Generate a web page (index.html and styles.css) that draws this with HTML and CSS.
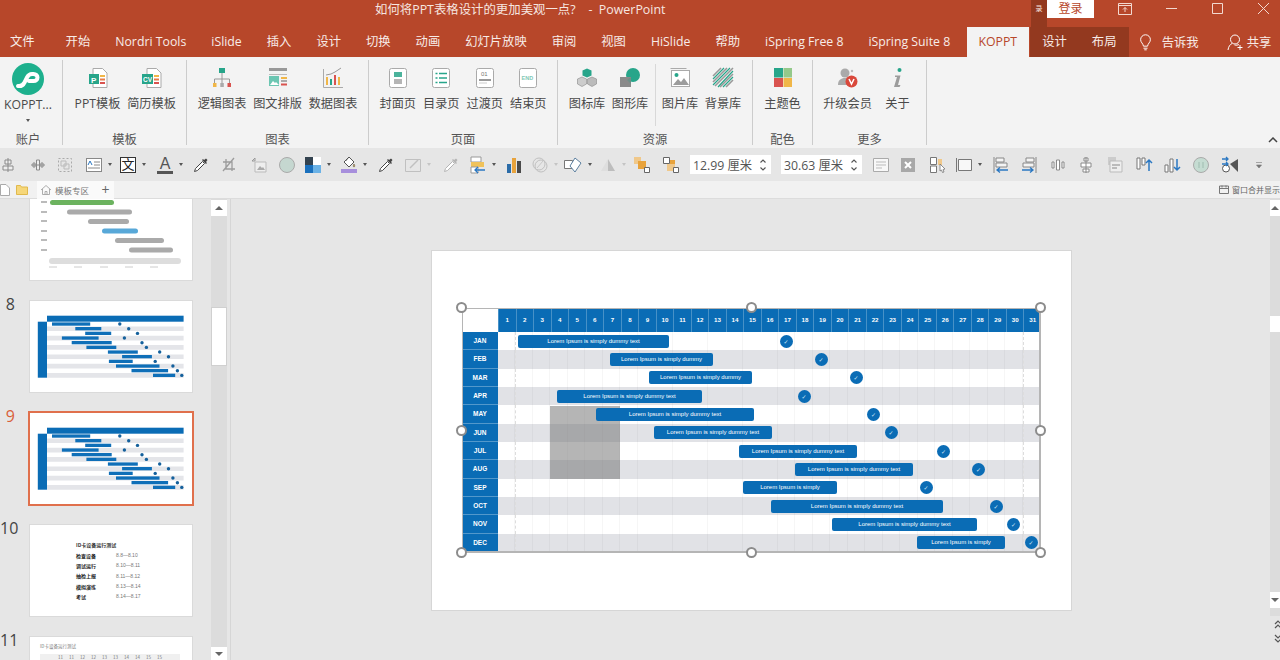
FILE: index.html
```html
<!DOCTYPE html>
<html lang="en">
<head>
    <meta charset="UTF-8">
    <title>PowerPoint</title>
    <link rel="stylesheet" href="styles.css">
</head>
<body>
    <!-- Shared shapes -->
    <svg class="defs" width="0" height="0">
        <defs>
            <symbol id="dropper" viewBox="0 0 16 16">
                <path d="M1.5 14.5l1-3 7-7 2 2-7 7z" fill="#fff" stroke="currentColor"/>
                <path d="M9 3l4 4 1-1-1-1 1.5-2-1.500-1.500-2 1.500-1-1z" fill="currentColor"/>
            </symbol>
            <symbol id="spinner" viewBox="0 0 8 14">
                <path d="M1.500 4.500L4 2l2.500 2.500M1.500 9.500L4 12l2.500-2.500" fill="none" stroke="#555" stroke-width="1.100"/>
            </symbol>
            <symbol id="thumbGantt" viewBox="0 0 162 91">
                <rect x="17" y="14.700" width="136.600" height="6" fill="#0a6cb5"/>
                <rect x="7.800" y="20.700" width="9.200" height="56" fill="#0a6cb5"/>
                <path d="M17 25.400h136.600v4.700H17zM17 34.700h136.600v4.700H17zM17 44.100h136.600v4.700H17zM17 53.400h136.600v4.700H17zM17 62.800h136.600v4.700H17zM17 72.100h136.600v4.700H17z" fill="#e4e5e9"/>
                <g fill="#0f6fb8">
                    <rect x="22" y="21.400" width="38.200" height="3.300"/>
                    <rect x="45.300" y="26" width="26" height="3.300"/>
                    <rect x="55.200" y="30.700" width="26" height="3.300"/>
                    <rect x="31.900" y="35.400" width="36.700" height="3.300"/>
                    <rect x="41.700" y="40" width="40" height="3.300"/>
                    <rect x="56.400" y="44.700" width="29.900" height="3.300"/>
                    <rect x="77.900" y="49.400" width="29.900" height="3.300"/>
                    <rect x="92.100" y="54" width="29.800" height="3.300"/>
                    <rect x="78.900" y="58.700" width="23.800" height="3.300"/>
                    <rect x="86" y="63.400" width="43.500" height="3.300"/>
                    <rect x="101.500" y="68" width="36.600" height="3.300"/>
                    <rect x="123" y="72.700" width="22.200" height="3.300"/>
                </g>
                <g fill="#14609c">
                    <circle cx="89.800" cy="23" r="1.700"/>
                    <circle cx="98.700" cy="27.700" r="1.700"/>
                    <circle cx="107.500" cy="32.400" r="1.700"/>
                    <circle cx="94.400" cy="37" r="1.700"/>
                    <circle cx="112" cy="41.700" r="1.700"/>
                    <circle cx="116.400" cy="46.400" r="1.700"/>
                    <circle cx="129.700" cy="51" r="1.700"/>
                    <circle cx="138.500" cy="55.700" r="1.700"/>
                    <circle cx="125.200" cy="60.400" r="1.700"/>
                    <circle cx="142.900" cy="65" r="1.700"/>
                    <circle cx="147.400" cy="69.700" r="1.700"/>
                    <circle cx="151.800" cy="74.400" r="1.700"/>
                </g>
            </symbol>
        </defs>
    </svg>

    <!-- Title bar -->
    <header class="titlebar">
        <div class="doc-title">如何将PPT表格设计的更加美观一点?&nbsp;&nbsp;&nbsp;&nbsp;-&nbsp;&nbsp;PowerPoint</div>
        <div class="win-controls">
            <div class="sign-strip">录</div>
            <div class="sign-in">登录</div>
            <div class="win-btn win-first">
                <svg width="14" height="12" viewBox="0 0 14 12"><path d="M.5.500h13v11H.5zM.5 2.500h13M7 9V4.500M5 6.500l2-2 2 2" fill="none" stroke="#f3d9d0"/></svg>
            </div>
            <div class="win-btn">
                <svg width="11" height="11" viewBox="0 0 11 11"><path d="M0 5.500h11" stroke="#f3d9d0"/></svg>
            </div>
            <div class="win-btn">
                <svg width="11" height="11" viewBox="0 0 11 11"><path d="M.5.500h10v10H.5z" fill="none" stroke="#f3d9d0"/></svg>
            </div>
            <div class="win-btn win-close">
                <svg width="11" height="11" viewBox="0 0 11 11"><path d="M0 0l11 11M11 0L0 11" stroke="#f3d9d0"/></svg>
            </div>
        </div>
    </header>

    <!-- Ribbon tabs -->
    <nav class="tabs">
        <span class="tab tab-file">文件</span>
        <span class="tab">开始</span>
        <span class="tab">Nordri Tools</span>
        <span class="tab">iSlide</span>
        <span class="tab">插入</span>
        <span class="tab">设计</span>
        <span class="tab">切换</span>
        <span class="tab">动画</span>
        <span class="tab">幻灯片放映</span>
        <span class="tab">审阅</span>
        <span class="tab">视图</span>
        <span class="tab">HiSlide</span>
        <span class="tab">帮助</span>
        <span class="tab">iSpring Free 8</span>
        <span class="tab">iSpring Suite 8</span>
        <span class="tab tab-active">KOPPT</span>
        <div class="tab-context">
            <span class="tab">设计</span>
            <span class="tab">布局</span>
        </div>
        <svg class="bulb" width="13" height="17" viewBox="0 0 16 20"><path d="M5.500 14.500C5 11 2 10 2 6.500a6 6 0 0 1 12 0c0 3.500-3 4.500-3.500 8zM5.500 17h5M6.500 19h3" fill="none" stroke="#fff" stroke-width="1.200"/></svg>
        <span class="tell-me">告诉我</span>
        <svg class="share" width="16" height="18" viewBox="0 0 16 18"><path d="M1 17c.5-3.500 2-5.500 4-6.500M12 11.500c-1 .5-3 1-4.500.5M8 11a4.500 4.500 0 1 0 0-9 4.500 4.500 0 0 0 0 9zM13 12v5M10.500 14.500h5" fill="none" stroke="#fff"/></svg>
        <span class="share-text">共享</span>
    </nav>

    <!-- Ribbon -->
    <section class="ribbon">
        <div class="group group-account">
            <div class="group-btns">
                <div class="btn btn-koppt">
                    <svg width="32" height="32" viewBox="0 0 32 32"><circle cx="16" cy="16" r="16" fill="#1db08d"/><path d="M6 23c3 .5 5-.5 6.500-3.500l2.500-5c1-2 2.500-3.500 5-3.500h1.500c2.500 0 4 1.500 4 3.500s-1.500 3.500-4 3.500h-4.500" fill="none" stroke="#fff" stroke-width="4" stroke-linecap="round"/></svg>
                    <span class="btn-label">KOPPT...</span>
                    <i class="caret caret-under"></i>
                </div>
            </div>
            <div class="group-label">账户</div>
        </div>

        <div class="group group-template">
            <div class="group-btns">
                <div class="btn">
                    <svg class="btn-icon" width="20" height="20" viewBox="0 0 20 20"><path d="M5 .500h9.500L19 5v14.500H5z" fill="#fff" stroke="#aaa"/><rect x="1" y="6" width="10" height="10" fill="#27a58a"/><text x="3" y="14.500" class="icon-text">P</text><path d="M12 7h5v2h-5z" fill="#f0b648"/><path d="M12 10.500h5v2h-5z" fill="#e67d4b"/><path d="M12 14h5v2h-5z" fill="#d9534f"/></svg>
                    <span class="btn-label">PPT模板</span>
                </div>
                <div class="btn">
                    <svg class="btn-icon" width="20" height="20" viewBox="0 0 20 20"><path d="M5 .500h9.500L19 5v14.500H5z" fill="#fff" stroke="#aaa"/><rect x="0" y="6" width="11" height="10" fill="#27a58a"/><text x="1" y="13.500" class="icon-text-small">CV</text><path d="M12 7h5v2h-5z" fill="#f0b648"/><path d="M12 10.500h5v2h-5z" fill="#e67d4b"/><path d="M12 14h5v2h-5z" fill="#d9534f"/></svg>
                    <span class="btn-label">简历模板</span>
                </div>
            </div>
            <div class="group-label">模板</div>
        </div>

        <div class="group group-chart">
            <div class="group-btns">
                <div class="btn">
                    <svg class="btn-icon" width="20" height="20" viewBox="0 0 20 20"><path d="M10 5v6M2.500 15v-4h15v4M10 11v4" fill="none" stroke="#999"/><rect x="7" y="0" width="6" height="5" fill="#27a58a"/><rect x="1" y="15" width="3.500" height="4" fill="#f0b648"/><rect x="8.300" y="15" width="3.500" height="4" fill="#aaa"/><rect x="15.500" y="15" width="3.500" height="4" fill="#d9534f"/></svg>
                    <span class="btn-label">逻辑图表</span>
                </div>
                <div class="btn">
                    <svg class="btn-icon" width="20" height="20" viewBox="0 0 20 20"><path d="M1 0h18v3H1z" fill="#999"/><path d="M1 6h18v1H1z" fill="#bbb"/><rect x="1" y="8" width="10" height="10" fill="#6cc6b2"/><path d="M2 17l3-4 2 2 1-1 3 3z" fill="#fff"/><path d="M13 9h6v2h-6z" fill="#f0b648"/><path d="M13 12h6v2h-6z" fill="#aaa"/><path d="M13 15.500h6v2h-6z" fill="#d9534f"/></svg>
                    <span class="btn-label">图文排版</span>
                </div>
                <div class="btn">
                    <svg class="btn-icon" width="20" height="20" viewBox="0 0 20 20"><path d="M.5 1v18.500H20" fill="none" stroke="#aaa"/><path d="M3 17V9h2v8z" fill="#f0b648"/><path d="M7 17v-6h2v6z" fill="#27a58a"/><path d="M11 17V7h2v10z" fill="#d9534f"/><path d="M15 17V9h2v8z" fill="#f0b648"/><path d="M3 7l5-1 4-2 6-4" fill="none" stroke="#999"/></svg>
                    <span class="btn-label">数据图表</span>
                </div>
            </div>
            <div class="group-label">图表</div>
        </div>

        <div class="group group-page">
            <div class="group-btns">
                <div class="btn">
                    <svg class="btn-icon" width="20" height="20" viewBox="0 0 20 20"><rect x="1.500" y=".5" width="17" height="19" rx="2" fill="#fff" stroke="#aaa"/><rect x="6" y="4" width="8" height="5" fill="#4bb39c"/><rect x="6" y="11" width="8" height="5" fill="#b5b5b5"/></svg>
                    <span class="btn-label">封面页</span>
                </div>
                <div class="btn">
                    <svg class="btn-icon" width="20" height="20" viewBox="0 0 20 20"><rect x="1.500" y=".5" width="17" height="19" rx="2" fill="#fff" stroke="#aaa"/><path d="M4.500 5.500h2M8 5.500h8M4.500 10h2M8 10h8M4.500 14.500h2M8 14.500h8" stroke="#27a58a" stroke-width="1.500"/></svg>
                    <span class="btn-label">目录页</span>
                </div>
                <div class="btn">
                    <svg class="btn-icon" width="20" height="20" viewBox="0 0 20 20"><rect x="1.500" y=".5" width="17" height="19" rx="2" fill="#fff" stroke="#aaa"/><text x="6" y="8" class="icon-text-tiny">01</text><path d="M4 12h12" stroke="#999" stroke-width="2"/><path d="M4 15h8" stroke="#ccc"/></svg>
                    <span class="btn-label">过渡页</span>
                </div>
                <div class="btn">
                    <svg class="btn-icon" width="20" height="20" viewBox="0 0 20 20"><rect x="1.500" y=".5" width="17" height="19" rx="2" fill="#fff" stroke="#aaa"/><text x="3.500" y="11.500" class="icon-text-end">END</text></svg>
                    <span class="btn-label">结束页</span>
                </div>
            </div>
            <div class="group-label">页面</div>
        </div>

        <div class="group group-assets">
            <div class="group-btns">
                <div class="btn">
                    <svg class="btn-icon" width="20" height="20" viewBox="0 0 20 20"><path d="M10 .5l4.500 2v5L10 9.500l-4.500-2v-5z" fill="#27a58a"/><path d="M5 9l4.500 2v5L5 18.500l-4.500-2.500v-5z" fill="#ccc" stroke="#888" stroke-width=".6"/><path d="M15 9l4.500 2v5L15 18.500 10.500 16v-5z" fill="#bbb" stroke="#888" stroke-width=".6"/></svg>
                    <span class="btn-label">图标库</span>
                </div>
                <div class="btn">
                    <svg class="btn-icon" width="20" height="20" viewBox="0 0 20 20"><circle cx="13" cy="7" r="7" fill="#27a58a"/><path d="M0 9h11v10H0z" fill="#8a8a8a"/><path d="M7 12l4-3v7z" fill="#6f8f88"/></svg>
                    <span class="btn-label">图形库</span>
                </div>
                <div class="sep"></div>
                <div class="btn">
                    <svg class="btn-icon" width="20" height="20" viewBox="0 0 20 20"><path d="M.5.500h16" stroke="#aaa"/><rect x="1.500" y="2.500" width="18" height="16" fill="#fff" stroke="#aaa"/><path d="M3 17l5-6 3 3 3-4 5 7z" fill="#9c9c9c"/><circle cx="6.500" cy="7" r="2" fill="#27a58a"/></svg>
                    <span class="btn-label">图片库</span>
                </div>
                <div class="btn">
                    <svg class="btn-icon" width="20" height="20" viewBox="0 0 20 20"><path d="M0 8l8-8M0 14L14 0M2 18L20 0M7 19L20 6M13 19l7-7" fill="none" stroke="#999" stroke-width="1.600"/><path d="M0 11L11 0M0 17L17 0M5 19L20 3M10 19L20 9" fill="none" stroke="#27a58a" stroke-width="1.200"/></svg>
                    <span class="btn-label">背景库</span>
                </div>
            </div>
            <div class="group-label">资源</div>
        </div>

        <div class="group group-color">
            <div class="group-btns">
                <div class="btn">
                    <svg class="btn-icon" width="20" height="20" viewBox="0 0 20 20"><path d="M1 0h9v9.500H1z" fill="#27a58a"/><path d="M10.500 0H19v9.500h-8.500z" fill="#94c98a"/><path d="M1 10h9v9H1z" fill="#d9534f"/><path d="M10.500 10H19v9h-8.500z" fill="#f0b648"/></svg>
                    <span class="btn-label">主题色</span>
                </div>
            </div>
            <div class="group-label">配色</div>
        </div>

        <div class="group group-more">
            <div class="group-btns">
                <div class="btn btn-vip">
                    <svg class="btn-icon" width="20" height="20" viewBox="0 0 20 20"><circle cx="7" cy="5" r="4.500" fill="#aaa"/><path d="M0 17c0-5 3-7 7-7s5 1 6 2v5z" fill="#aaa"/><circle cx="13.500" cy="13.500" r="6" fill="#d9483b"/><path d="M11 11l2.500 5 2.500-5" fill="none" stroke="#fff" stroke-width="1.500"/><circle cx="14" cy="3" r="1.200" fill="#bbb"/></svg>
                    <span class="btn-label">升级会员</span>
                </div>
                <div class="btn btn-about">
                    <svg class="btn-icon" width="20" height="20" viewBox="0 0 20 20"><circle cx="11.500" cy="2" r="2" fill="#27a58a"/><path d="M7 7.500h5.500L10 17h2.500L11.500 19H6l3-10H7z" fill="#9c9c9c"/></svg>
                    <span class="btn-label">关于</span>
                </div>
            </div>
            <div class="group-label">更多</div>
        </div>

        <svg class="collapse" width="10" height="6" viewBox="0 0 10 6"><path d="M1 5l4-4 4 4" fill="none" stroke="#444" stroke-width="1.500"/></svg>
    </section>

    <!-- Quick tools -->
    <section class="toolbar">
        <div class="tool w30"><svg width="16" height="16" viewBox="0 0 16 16"><path d="M8 1v14M5 3h6v4H5zM3 9h10v4H3z" fill="#eee" stroke="#8a8a8a"/></svg></div>
        <div class="tool w27"><svg width="16" height="16" viewBox="0 0 16 16"><path d="M1 8h14M3 6h2v4H3zM6.500 3h3v10h-3zM11 6h2v4h-2z" fill="#eee" stroke="#8a8a8a"/></svg></div>
        <div class="tool w29"><svg width="16" height="16" viewBox="0 0 16 16"><path d="M1.500 1.500h13v13h-13z" fill="none" stroke="#aaa" stroke-dasharray="2 2"/><path d="M4 4h5v5H4zM7 7h5v5H7z" fill="none" stroke="#bbb"/></svg></div>
        <div class="tool w34"><svg width="16" height="14" viewBox="0 0 16 14"><rect x=".5" y=".5" width="15" height="13" fill="#fff" stroke="#888"/><path d="M8 4h6M8 7h6M2 10h12" stroke="#8a8a8a"/><path d="M2 7l2-4 2 4" fill="none" stroke="#2b78c2"/></svg><i class="caret"></i></div>
        <div class="tool w37"><span class="wen">文</span><i class="caret"></i></div>
        <div class="tool w36"><span class="letter-a">A</span><i class="caret"></i></div>
        <div class="tool w28 tool-dark"><svg width="16" height="16"><use href="#dropper"/></svg></div>
        <div class="tool w30"><svg width="16" height="16" viewBox="0 0 16 16"><path d="M5 2v10h9M2 5h9v9M13 1L2 14" fill="none" stroke="#9c9c9c" stroke-width="1.300"/></svg></div>
        <div class="tool w28"><svg width="16" height="16" viewBox="0 0 16 16"><path d="M4 5h11v10H4z" fill="#eee" stroke="#bbb"/><path d="M1 4l3-3M4 1v3H1" fill="none" stroke="#999"/><path d="M6 13l3-4 2 2 1-1 2 3z" fill="#aaa"/></svg></div>
        <div class="tool w26"><svg width="16" height="16" viewBox="0 0 16 16"><circle cx="8" cy="8" r="7.500" fill="#c5d7d0" stroke="#aaa"/></svg></div>
        <div class="tool w36"><svg width="16" height="16" viewBox="0 0 16 16"><path d="M0 0h8v8H0z" fill="#33424f"/><path d="M8 0h8v8H8z" fill="#fff"/><path d="M0 8h8v8H0z" fill="#1a70bd"/><path d="M8 8h8v8H8z" fill="#6bb2e6"/></svg><i class="caret"></i></div>
        <div class="tool w37"><svg width="16" height="17" viewBox="0 0 16 17"><path d="M8 1l5 5-5 5-5-5z" fill="#fff" stroke="#555"/><path d="M5 5l3-4M13 8c1 1 1 3 0 3s-1-2 0-3z" fill="#f0b648" stroke="#555" stroke-width=".6"/><path d="M0 13h16v4H0z" fill="#a78fdc"/></svg><i class="caret"></i></div>
        <div class="tool w27 tool-dark"><svg width="16" height="16"><use href="#dropper"/></svg></div>
        <div class="tool w38 tool-faint"><svg width="16" height="14" viewBox="0 0 16 14"><path d="M.5 1.500h15v12H.5z" fill="none" stroke="#c0c0c0"/><path d="M5 10l8-8" stroke="#c0c0c0" stroke-width="1.500"/></svg><i class="caret"></i></div>
        <div class="tool w27 tool-pale"><svg width="16" height="16"><use href="#dropper"/></svg></div>
        <div class="tool w36"><svg width="16" height="18" viewBox="0 0 16 18"><path d="M1 1h10v5H1z" fill="#fff" stroke="#999"/><path d="M1 6h13v5H1z" fill="#f0c25a"/><path d="M1 11h7v6H1z" fill="#fff" stroke="#999"/><path d="M15 14H5M8 11l-3 3 3 3" fill="none" stroke="#2b78c2" stroke-width="1.300"/></svg><i class="caret"></i></div>
        <div class="tool w26"><svg width="16" height="16" viewBox="0 0 16 16"><path d="M1 7h4v9H1z" fill="#2b6ca8"/><path d="M6 1h4v15H6z" fill="#e8a33c"/><path d="M11 4h4v12h-4z" fill="#4a4a4a"/></svg></div>
        <div class="tool w32 tool-faint"><svg width="16" height="16" viewBox="0 0 16 16"><circle cx="7" cy="7" r="6" fill="none" stroke="#c0c0c0"/><circle cx="9" cy="9" r="6" fill="none" stroke="#c0c0c0"/><path d="M5 11l6-7" stroke="#c8c8c8"/></svg><i class="caret"></i></div>
        <div class="tool w36"><svg width="18" height="16" viewBox="0 0 18 16"><path d="M.5 3.500h8v8h-8z" fill="#fff" stroke="#777"/><path d="M11 1l6 5-6 9-5-6z" fill="#fff" stroke="#5b7f9f"/></svg><i class="caret"></i></div>
        <div class="tool w34 tool-faint"><svg width="16" height="14" viewBox="0 0 16 14"><path d="M8 1l7 12H8z" fill="#bdbdbd"/><path d="M8 1L1 13h7z" fill="#dedede"/></svg><i class="caret"></i></div>
        <div class="tool w29"><svg width="16" height="16" viewBox="0 0 16 16"><path d="M0 0h7v7H0z" fill="#f0c88a"/><path d="M4 4h8v8H4z" fill="#e8a33c"/><path d="M10.500 10.500h5v5h-5z" fill="#fff" stroke="#666"/></svg></div>
        <div class="tool w27"><svg width="16" height="16" viewBox="0 0 16 16"><path d="M.5.500h6v6h-6z" fill="#fff" stroke="#666"/><path d="M4 7h8v7H4z" fill="#f0c88a"/><path d="M7 3h5v4H7z" fill="#e8a33c"/><path d="M10.500 10.500h5v5h-5z" fill="#fff" stroke="#666"/></svg></div>
        <div class="size-input"><span>12.99 厘米</span><svg width="8" height="14"><use href="#spinner"/></svg></div>
        <div class="size-input size-second"><span>30.63 厘米</span><svg width="8" height="14"><use href="#spinner"/></svg></div>
        <div class="tool w28"><svg width="16" height="14" viewBox="0 0 16 14"><path d="M.5.500h15v13H.5z" fill="#f8f8f8" stroke="#aaa"/><path d="M3 4h10M3 7h10M3 10h6" stroke="#bbb"/></svg></div>
        <div class="tool w29"><svg width="14" height="14" viewBox="0 0 14 14"><path d="M0 0h14v14H0z" fill="#a8a8a8"/><path d="M4 4l6 6M10 4l-6 6" stroke="#fff" stroke-width="2"/></svg></div>
        <div class="tool w26"><svg width="16" height="16" viewBox="0 0 16 16"><path d="M.5.500h6v7h-6zM.5 9h6v6.500h-6z" fill="#fff" stroke="#777"/><path d="M8 2h4v6H8z" fill="#f0c88a"/><path d="M10 7l5 5-2 .5 1 2.500-1.500.5-1-2.500L10 14z" fill="#fff" stroke="#777" stroke-width=".8"/></svg></div>
        <div class="tool w37"><svg width="16" height="14" viewBox="0 0 16 14"><path d="M.5 0v14M2.500 1.500h13v11h-13z" fill="#f8f8f8" stroke="#777"/></svg><i class="caret"></i></div>
        <div class="tool w28"><svg width="16" height="16" viewBox="0 0 16 16"><path d="M1 0v16M3 1h8v4H3zM3 6h11v4H3z" fill="#f4f4f4" stroke="#888"/><path d="M15 13H4M7 10.500L4 13l3 2.500" fill="none" stroke="#2b78c2" stroke-width="1.300"/></svg></div>
        <div class="tool w29"><svg width="16" height="16" viewBox="0 0 16 16"><path d="M15 0v16M5 1h8v4H5zM2 6h11v4H2z" fill="#f4f4f4" stroke="#888"/><path d="M1 13h11M9 10.500l3 2.500-3 2.500" fill="none" stroke="#2b78c2" stroke-width="1.300"/></svg></div>
        <div class="tool w28"><svg width="16" height="16" viewBox="0 0 16 16"><path d="M2 5h2v6H2zM6.500 3h3v10h-3zM12 5h2v6h-2z" fill="#fff" stroke="#8a8a8a"/></svg></div>
        <div class="tool w29"><svg width="16" height="16" viewBox="0 0 16 16"><path d="M8 0v16M6 1h4v3H6zM3 6h10v4H3zM5 12h6v3H5z" fill="#fff" stroke="#8a8a8a"/></svg></div>
        <div class="tool w29"><svg width="16" height="16" viewBox="0 0 16 16"><path d="M1 0h8v8H1z" fill="#ccc"/><path d="M3 4h12v11H3z" fill="#eee" stroke="#bbb"/><path d="M5 8h8M5 11h5" stroke="#888"/></svg></div>
        <div class="tool w28"><svg width="16" height="16" viewBox="0 0 16 16"><path d="M1 1h3v11H1zM6 1h3v7H6z" fill="#fff" stroke="#777"/><path d="M13 14V3M10 6l3-3 3 3" fill="none" stroke="#2b78c2" stroke-width="1.500"/></svg></div>
        <div class="tool w29"><svg width="16" height="16" viewBox="0 0 16 16"><path d="M1 8h3v7H1zM6 2h3v13H6z" fill="#fff" stroke="#777"/><path d="M13 2v11M10 10l3 3 3-3" fill="none" stroke="#2b78c2" stroke-width="1.500"/></svg></div>
        <div class="tool w28"><svg width="16" height="16" viewBox="0 0 16 16"><circle cx="8" cy="8" r="7.500" fill="#c5dcd2" stroke="#aaa"/><path d="M6 5v6M10 5v6" stroke="#9fbcb0"/></svg></div>
        <div class="tool w30"><svg width="18" height="17" viewBox="0 0 18 17"><path d="M1 3h6M5 1l2 2-2 2" fill="none" stroke="#2b78c2" stroke-width="1.300"/><path d="M9 8l8-5v13z" fill="#555"/><circle cx="5" cy="12.500" r="3.500" fill="#fff" stroke="#555"/><path d="M1 8h6M5 6l2 2-2 2" fill="none" stroke="#2b78c2" stroke-width="1.300"/></svg></div>
        <div class="tool w28"><svg width="16" height="16" viewBox="0 0 16 16"><path d="M5 5.500h6M5.500 8h5l-2.500 3z" fill="#777" stroke="#777" stroke-width=".6"/></svg></div>
    </section>

    <!-- File tabs -->
    <section class="file-tabs">
        <svg class="file-ico" width="10" height="12" viewBox="0 0 10 12"><path d="M.5.500H6L9.500 4v7.500H.5z" fill="#fff" stroke="#aaa"/></svg>
        <svg class="file-ico" width="12" height="11" viewBox="0 0 12 11"><path d="M.5 1.500h4l1 1.500h6v7.500H.5z" fill="#f6d77a" stroke="#e0b94d"/></svg>
        <div class="file-tab">
            <svg width="10" height="10" viewBox="0 0 10 10"><path d="M0 5l5-4.500L10 5M1.500 4v5.500h7V4M4 9.500V6.500h2v3" fill="none" stroke="#999" stroke-width=".8"/></svg>
            <span>模板专区</span>
        </div>
        <div class="file-add">+</div>
        <div class="merge-view">
            <svg width="10" height="9" viewBox="0 0 10 9"><path d="M.5 1h9v7.500h-9zM.5 3.500h9M3 .5v2M7 .5v2" fill="none" stroke="#777"/></svg>
            <span>窗口合并显示</span>
        </div>
    </section>

    <main class="workspace">
        <!-- Slide thumbnails -->
        <aside class="pane">
            <div class="thumbs">
                <div class="thumb-row thumb-row-first">
                    <span class="thumb-num"></span>
                    <div class="thumb thumb-cut">
                        <svg width="162" height="81" viewBox="0 0 162 81">
                            <path d="M11 2h6v2h-6zM11 12h6v2h-6zM11 21h6v2h-6zM11 31h6v2h-6zM11 40h6v2h-6zM11 50h6v2h-6z" fill="#bbb"/>
                            <rect x="20" y="1" width="64" height="5" rx="2.500" fill="#6cb35f"/>
                            <rect x="37" y="10.500" width="65" height="5" rx="2.500" fill="#aaa"/>
                            <rect x="58" y="20" width="41" height="5" rx="2.500" fill="#aaa"/>
                            <rect x="72" y="29.500" width="36" height="5" rx="2.500" fill="#58a8d8"/>
                            <rect x="85" y="39" width="49" height="5" rx="2.500" fill="#aaa"/>
                            <rect x="99" y="48.500" width="44" height="5" rx="2.500" fill="#aaa"/>
                            <rect x="19" y="59" width="132" height="6" rx="3" fill="#dddddd"/>
                            <path d="M19 68h8M44 68h8M70 68h8M95 68h8M120 68h8" stroke="#ccc"/>
                        </svg>
                    </div>
                </div>
                <div class="thumb-row">
                    <span class="thumb-num">8</span>
                    <div class="thumb"><svg width="162" height="91"><use href="#thumbGantt"/></svg></div>
                </div>
                <div class="thumb-row">
                    <span class="thumb-num thumb-num-active">9</span>
                    <div class="thumb thumb-active"><svg width="162" height="91"><use href="#thumbGantt"/></svg></div>
                </div>
                <div class="thumb-row">
                    <span class="thumb-num">10</span>
                    <div class="thumb thumb-list">
                        <div class="list-title">ID卡设备运行测试</div>
                        <div class="list-grid">
                            <b>检查设备</b><span>8.8—8.10</span>
                            <b>调试运行</b><span>8.10—8.11</span>
                            <b>抽检上报</b><span>8.11—8.12</span>
                            <b>模拟演练</b><span>8.13—8.14</span>
                            <b>考试</b><span>8.14—8.17</span>
                        </div>
                    </div>
                </div>
                <div class="thumb-row">
                    <span class="thumb-num">11</span>
                    <div class="thumb thumb-table">
                        <div class="table-title">ID卡设备运行测试</div>
                        <div class="table-head">11 11 12 12 13 13 14 14 15 15</div>
                    </div>
                </div>
            </div>
            <div class="scrollbar">
                <div class="sb-btn"><i class="tri-up"></i></div>
                <div class="sb-thumb"></div>
                <div class="sb-btn sb-btn-end"><i class="tri-down"></i></div>
            </div>
        </aside>

        <!-- Editing canvas -->
        <div class="canvas">
            <div class="slide">
                <div class="gantt">
                    <div class="gantt-head">
                        <div class="corner"></div>
                        <div class="days">
                            <span>1</span><span>2</span><span>3</span><span>4</span><span>5</span><span>6</span><span>7</span><span>8</span><span>9</span><span>10</span><span>11</span><span>12</span><span>13</span><span>14</span><span>15</span><span>16</span><span>17</span><span>18</span><span>19</span><span>20</span><span>21</span><span>22</span><span>23</span><span>24</span><span>25</span><span>26</span><span>27</span><span>28</span><span>29</span><span>30</span><span>31</span>
                        </div>
                    </div>
                    <div class="gantt-row">
                        <div class="month">JAN</div>
                        <div class="track">
                            <div class="bar" style="left:20px;width:151px">Lorem Ipsum is simply dummy text</div>
                            <div class="dot" style="left:281.500px">✓</div>
                        </div>
                    </div>
                    <div class="gantt-row">
                        <div class="month">FEB</div>
                        <div class="track">
                            <div class="bar" style="left:112px;width:103px">Lorem Ipsum is simply dummy</div>
                            <div class="dot" style="left:316.500px">✓</div>
                        </div>
                    </div>
                    <div class="gantt-row">
                        <div class="month">MAR</div>
                        <div class="track">
                            <div class="bar" style="left:151px;width:103px">Lorem Ipsum is simply dummy</div>
                            <div class="dot" style="left:351.500px">✓</div>
                        </div>
                    </div>
                    <div class="gantt-row">
                        <div class="month">APR</div>
                        <div class="track">
                            <div class="bar" style="left:59px;width:145px">Lorem Ipsum is simply dummy text</div>
                            <div class="dot" style="left:299.500px">✓</div>
                        </div>
                    </div>
                    <div class="gantt-row">
                        <div class="month">MAY</div>
                        <div class="track">
                            <div class="bar" style="left:98px;width:158px">Lorem Ipsum is simply dummy text</div>
                            <div class="dot" style="left:369px">✓</div>
                        </div>
                    </div>
                    <div class="gantt-row">
                        <div class="month">JUN</div>
                        <div class="track">
                            <div class="bar" style="left:156px;width:118px">Lorem Ipsum is simply dummy text</div>
                            <div class="dot" style="left:386.500px">✓</div>
                        </div>
                    </div>
                    <div class="gantt-row">
                        <div class="month">JUL</div>
                        <div class="track">
                            <div class="bar" style="left:241px;width:118px">Lorem Ipsum is simply dummy text</div>
                            <div class="dot" style="left:439px">✓</div>
                        </div>
                    </div>
                    <div class="gantt-row">
                        <div class="month">AUG</div>
                        <div class="track">
                            <div class="bar" style="left:297px;width:118px">Lorem Ipsum is simply dummy text</div>
                            <div class="dot" style="left:474px">✓</div>
                        </div>
                    </div>
                    <div class="gantt-row">
                        <div class="month">SEP</div>
                        <div class="track">
                            <div class="bar" style="left:245px;width:94px">Lorem Ipsum is simply</div>
                            <div class="dot" style="left:421.500px">✓</div>
                        </div>
                    </div>
                    <div class="gantt-row">
                        <div class="month">OCT</div>
                        <div class="track">
                            <div class="bar" style="left:273px;width:172px">Lorem Ipsum is simply dummy text</div>
                            <div class="dot" style="left:491.500px">✓</div>
                        </div>
                    </div>
                    <div class="gantt-row">
                        <div class="month">NOV</div>
                        <div class="track">
                            <div class="bar" style="left:334px;width:145px">Lorem Ipsum is simply dummy text</div>
                            <div class="dot" style="left:509px">✓</div>
                        </div>
                    </div>
                    <div class="gantt-row">
                        <div class="month">DEC</div>
                        <div class="track">
                            <div class="bar" style="left:419px;width:88px">Lorem Ipsum is simply</div>
                            <div class="dot" style="left:526.500px">✓</div>
                        </div>
                    </div>

                    <div class="grey-block"></div>

                    <!-- Selection frame -->
                    <div class="selection">
                        <i class="handle h-tl"></i><i class="handle h-tc"></i><i class="handle h-tr"></i>
                        <i class="handle h-ml"></i><i class="handle h-mr"></i>
                        <i class="handle h-bl"></i><i class="handle h-bc"></i><i class="handle h-br"></i>
                    </div>
                </div>
            </div>
        </div>

        <div class="v-scroll">
            <div class="sb-btn"><i class="tri-up"></i></div>
            <div class="v-thumb"></div>
            <div class="sb-btn v-down"><i class="tri-down"></i></div>
            <div class="page-arrows">
                <svg width="8" height="9" viewBox="0 0 8 9"><path d="M1 4l3-3 3 3M1 8l3-3 3 3" fill="none" stroke="#555" stroke-width="1.200"/></svg>
                <svg width="8" height="9" viewBox="0 0 8 9"><path d="M1 1l3 3 3-3M1 5l3 3 3-3" fill="none" stroke="#555" stroke-width="1.200"/></svg>
            </div>
        </div>
    </main>
</body>
</html>
```

FILE: styles.css
```css
* {
    box-sizing: border-box;
}

html, body {
    margin: 0;
    padding: 0;
    width: 1280px;
    height: 660px;
    overflow: hidden;
}

body {
    font-family: "Open Sans", "Noto Sans CJK SC", sans-serif;
    font-size: 12px;
    color: #444;
    background-color: #e6e6e6;
}

.defs {
    position: absolute;
}

/* Title bar */
.titlebar {
    display: flex;
    height: 27px;
    background-color: #b7472a;
    color: #f6e6e0;
}

.doc-title {
    margin-left: 375px;
    font-size: 12.400px;
    line-height: 19px;
    white-space: nowrap;
}

.win-controls {
    display: flex;
    margin-left: auto;
}

.sign-strip {
    width: 16px;
    background-color: #93391f;
    font-size: 7px;
    line-height: 18px;
    text-align: center;
}

.sign-in {
    width: 47px;
    height: 18px;
    background-color: #fff;
    color: #b7472a;
    font-size: 12px;
    line-height: 18px;
    text-align: center;
}

.win-btn {
    display: flex;
    justify-content: center;
    width: 46px;
    padding-top: 3px;
    height: 18px;
}

.win-first {
    margin-left: 8px;
}

.win-close {
    width: 40px;
    padding-left: 6px;
}

/* Ribbon tabs */
.tabs {
    display: flex;
    align-items: center;
    height: 30px;
    background-color: #b7472a;
    color: #f8ece8;
}

.tab {
    padding: 0 12.500px;
    font-size: 12.300px;
    line-height: 30px;
    white-space: nowrap;
}

.tab-file {
    padding: 0 18.500px 0 10px;
}

.tab-active {
    width: 62px;
    margin-left: 4px;
    padding: 0;
    background-color: #f3f3f3;
    color: #b7472a;
    text-align: center;
}

.tab-context {
    display: flex;
    width: 99px;
    margin-left: 1px;
    background-color: #93391f;
}

.bulb {
    margin-left: 10px;
}

.tell-me {
    margin-left: 10px;
    font-size: 12.300px;
}

.share {
    margin-left: 28px;
}

.share-text {
    margin-left: 4px;
    font-size: 12.300px;
}

/* Ribbon */
.ribbon {
    position: relative;
    display: flex;
    height: 91px;
    padding-top: 3px;
    background-color: #f3f3f3;
}

.group {
    display: flex;
    flex-direction: column;
    align-items: center;
    height: 85px;
    border-right: 1px solid #cccccc;
}

.group-account { width: 63px; padding-right: 6px; }
.group-template { width: 124px; }
.group-chart { width: 182px; }
.group-page { width: 189px; }
.group-assets { width: 195px; }
.group-color { width: 60px; }
.group-more { width: 114px; padding-left: 6px; }

.group-btns {
    display: flex;
    justify-content: center;
    padding-top: 8px;
}

.group-label {
    margin-top: auto;
    margin-bottom: -3px;
    font-size: 12.300px;
    line-height: 16px;
    color: #555;
}

.group-more .group-label {
    margin-left: -6px;
}

.btn {
    display: flex;
    flex-direction: column;
    align-items: center;
    width: 43.500px;
    white-space: nowrap;
}

.group-template .btn { width: 54px; }
.group-chart .btn { width: 55.500px; }
.group-assets .btn { width: 43px; }
.group-color .btn { width: 58px; }
.btn-vip { width: 50px; }
.btn-about { width: 50px; }

.btn-icon {
    display: block;
    margin-bottom: 7px;
    overflow: visible;
}

.btn-label {
    font-size: 12.200px;
    line-height: 17px;
    color: #4a4a4a;
}

.btn-koppt {
    width: 57px;
    margin-top: -5px;
}

.btn-koppt .btn-label {
    margin-top: 1px;
}

.caret-under {
    margin: 6px 0 0 !important;
}

.sep {
    width: 1px;
    height: 62px;
    margin: -4px 3px 0;
    background-color: #d8d8d8;
}

.collapse {
    position: absolute;
    right: 2px;
    bottom: 5px;
}

.icon-text {
    font-family: "Liberation Sans", sans-serif;
    font-size: 8px;
    font-weight: bold;
    fill: #fff;
}

.icon-text-small {
    font-family: "Liberation Sans", sans-serif;
    font-size: 6.500px;
    font-weight: bold;
    fill: #fff;
}

.icon-text-tiny {
    font-family: "Liberation Sans", sans-serif;
    font-size: 6px;
    fill: #777;
}

.icon-text-end {
    font-family: "Liberation Sans", sans-serif;
    font-size: 5.500px;
    font-weight: bold;
    fill: #7fc8b6;
}

/* Quick tools */
.toolbar {
    display: flex;
    align-items: center;
    height: 33px;
    background-color: #e6e6e6;
}

.tool {
    display: flex;
    align-items: center;
    flex: none;
    height: 20px;
}

.tool svg {
    flex: none;
    overflow: visible;
}

.w26 { width: 26px; }
.w27 { width: 27px; }
.w28 { width: 28px; }
.w29 { width: 29px; }
.w30 { width: 30px; }
.w32 { width: 32px; }
.w34 { width: 34px; }
.w36 { width: 36px; }
.w37 { width: 37px; }
.w38 { width: 38px; }

.tool-dark { color: #444; }
.tool-pale { color: #b5b5b5; }
.tool-faint { color: #c0c0c0; }

.caret {
    flex: none;
    width: 0;
    height: 0;
    margin-left: 6px;
    border-left: 2.500px solid transparent;
    border-right: 2.500px solid transparent;
    border-top: 3px solid #555;
}

.tool-faint .caret {
    border-top-color: #c4c4c4;
}

.wen {
    flex: none;
    width: 16px;
    height: 16px;
    border: 1px solid #333;
    background-color: #fff;
    color: #222;
    font-size: 13px;
    line-height: 13px;
    text-align: center;
}

.letter-a {
    flex: none;
    width: 16px;
    border-bottom: 3px solid #555;
    color: #555;
    font-family: "Liberation Sans", sans-serif;
    font-size: 16px;
    line-height: 15px;
    text-align: center;
}

.size-input {
    display: flex;
    align-items: center;
    justify-content: space-between;
    flex: none;
    width: 81px;
    height: 19px;
    padding: 0 4px 0 3px;
    margin-right: 10px;
    background-color: #fff;
    font-size: 12.300px;
    color: #555;
}

.size-second {
    margin-right: 11px;
}

/* File tabs */
.file-tabs {
    display: flex;
    align-items: center;
    height: 18px;
    background-color: #f1f1f1;
    border-bottom: 1px solid #dcdcdc;
}

.file-ico {
    flex: none;
    margin-right: 6px;
}

.file-tab {
    display: flex;
    align-items: center;
    gap: 4px;
    width: 60px;
    height: 18px;
    margin-left: 3px;
    padding-left: 4px;
    background-color: #fafafa;
    font-size: 8.500px;
    color: #777;
}

.file-add {
    width: 17px;
    background-color: #fafafa;
    font-size: 14px;
    line-height: 18px;
    text-align: center;
    color: #666;
}

.merge-view {
    display: flex;
    align-items: center;
    gap: 3px;
    margin-left: auto;
    white-space: nowrap;
    font-size: 8px;
    color: #666;
    width: 61px;
}

.merge-view svg {
    flex: none;
}

/* Workspace */
.workspace {
    display: flex;
    height: 461px;
}

.pane {
    display: flex;
    flex: none;
    width: 231px;
    padding-right: 3px;
    border-right: 1px solid #d6d6d6;
}

.thumbs {
    width: 212px;
    overflow: hidden;
}

.thumb-row {
    display: flex;
    height: 112px;
    padding-left: 0;
}

.thumb-row-first {
    height: 102px;
}

.thumb-num {
    width: 15px;
    margin: -7px 15px 0 0;
    font-size: 16px;
    line-height: 20px;
    text-align: right;
    color: #444;
    white-space: nowrap;
}

.thumb-num-active {
    color: #d9603a;
}

.thumb {
    position: relative;
    width: 162px;
    height: 91px;
    background-color: #fff;
    box-shadow: 0 0 0 1px #dadada;
}

.thumb svg {
    display: block;
}

.thumb-cut {
    height: 81px;
}

.thumb-active {
    outline: 2px solid #e0704c;
    box-shadow: none;
}

.thumb-list {
    padding: 16px 0 0 46px;
    font-family: "Noto Sans CJK SC", sans-serif;
    font-size: 5px;
    color: #333;
}

.list-title {
    font-weight: bold;
    line-height: 7px;
    margin-bottom: 2px;
}

.list-grid {
    display: grid;
    grid-template-columns: 40px 1fr;
    grid-auto-rows: 10.300px;
    align-items: center;
}

.list-grid b {
    color: #222;
}

.list-grid span {
    color: #777;
    font-family: "Liberation Sans", sans-serif;
}

.thumb-table {
    padding: 6px 0 0 10px;
    font-family: "Noto Sans CJK SC", sans-serif;
    font-size: 4.500px;
    color: #777;
}

.table-title {
    line-height: 6px;
}

.table-head {
    width: 140px;
    margin-top: 5px;
    padding-left: 18px;
    background-color: #f0f0f0;
    word-spacing: 5px;
    line-height: 6px;
}

.scrollbar {
    display: flex;
    flex-direction: column;
    flex: none;
    width: 16px;
    margin-left: -1px;
    background-color: #dcdcdc;
}

.sb-btn {
    display: flex;
    align-items: center;
    justify-content: center;
    flex: none;
    width: 16px;
    height: 16px;
    margin-top: 1px;
    background-color: #fff;
}

.sb-thumb {
    flex: none;
    width: 16px;
    height: 59px;
    margin-top: 91px;
    background-color: #fff;
    border: 1px solid #d0d0d0;
}

.sb-btn-end {
    height: 13px;
    margin-top: auto;
}

.tri-up {
    width: 0;
    height: 0;
    border-left: 4px solid transparent;
    border-right: 4px solid transparent;
    border-bottom: 4px solid #666;
}

.tri-down {
    width: 0;
    height: 0;
    border-left: 4px solid transparent;
    border-right: 4px solid transparent;
    border-top: 4px solid #666;
}

.canvas {
    display: flex;
    flex: 1;
    align-items: center;
    justify-content: center;
    padding: 2px 0 0 2px;
}

.v-scroll {
    display: flex;
    flex-direction: column;
    flex: none;
    width: 10px;
    background-color: #dcdcdc;
    overflow: hidden;
}

.v-thumb {
    flex: none;
    width: 16px;
    height: 16px;
    margin-top: 100px;
    background-color: #fff;
}

.v-down {
    margin-top: 260px;
}

.v-scroll .sb-btn {
    width: 10px;
}

.page-arrows {
    display: flex;
    flex-direction: column;
    gap: 5px;
    align-items: center;
    margin-top: 8px;
    padding-top: 4px;
    padding-left: 5px;
    background-color: #e6e6e6;
    height: 60px;
}

/* Slide */
.slide {
    width: 641px;
    height: 361px;
    padding: 57px 0 0 30px;
    background-color: #fff;
    border: 1px solid #d6d6d6;
    flex: none;
}

.gantt {
    position: relative;
    width: 579px;
    padding-bottom: 1px;
    font-family: "Liberation Sans", sans-serif;
}

.gantt-head {
    display: flex;
    height: 24px;
}

.corner {
    flex: none;
    width: 36px;
    background-color: #fff;
}

.days {
    display: flex;
    flex: 1;
    background-color: #0a6cb5;
}

.days span {
    flex: 1;
    color: #fff;
    font-size: 6.200px;
    font-weight: bold;
    line-height: 24px;
    text-align: center;
    border-left: 1px solid rgba(255, 255, 255, 0.25);
}

.gantt-row {
    display: flex;
    height: 18.350px;
}

.month {
    flex: none;
    width: 36px;
    background-color: #0a6cb5;
    color: #fff;
    font-size: 6.500px;
    font-weight: bold;
    line-height: 18.350px;
    text-align: center;
    border-bottom: 1px solid rgba(255, 255, 255, 0.3);
}

.track {
    position: relative;
    flex: 1;
    background-color: #fff;
    background-image: repeating-linear-gradient(90deg, transparent 0, transparent 16.500px, rgba(0, 0, 0, 0.035) 16.500px, rgba(0, 0, 0, 0.035) 17.500px);
}

.gantt-row:nth-of-type(odd) .track {
    background-color: #e1e2e6;
}

.track::before,
.track::after {
    content: "";
    position: absolute;
    top: 0;
    bottom: 0;
    border-left: 1px dashed #dddddd;
}

.track::before {
    left: 17px;
}

.track::after {
    right: 17px;
}

.bar {
    position: absolute;
    top: 2.700px;
    z-index: 2;
    height: 13px;
    background-color: #0a6cb5;
    border-radius: 2px;
    color: #fff;
    font-size: 6px;
    line-height: 13px;
    text-align: center;
    white-space: nowrap;
}

.dot {
    position: absolute;
    top: 2.700px;
    z-index: 2;
    width: 13px;
    height: 13px;
    background-color: #0a6cb5;
    border-radius: 50%;
    color: #cfe6f7;
    font-family: "DejaVu Sans", sans-serif;
    font-size: 6px;
    line-height: 13px;
    text-align: center;
}

.grey-block {
    position: absolute;
    left: 88px;
    top: 98px;
    z-index: 1;
    width: 70px;
    height: 73px;
    background-color: rgba(120, 120, 120, 0.55);
}

.selection {
    position: absolute;
    inset: 0;
    z-index: 3;
    box-shadow: inset 1px 1px #b5b5b5, inset -2px -2px #b5b5b5;
}

.handle {
    position: absolute;
    width: 11px;
    height: 11px;
    margin: -6px 0 0 -6px;
    background-color: #fff;
    border: 2px solid #8c8c8c;
    border-radius: 50%;
}

.h-tl { left: 0; top: 0; }
.h-tc { left: 50%; top: 0; }
.h-tr { left: 100%; top: 0; }
.h-ml { left: 0; top: 50%; }
.h-mr { left: 100%; top: 50%; }
.h-bl { left: 0; top: 100%; }
.h-bc { left: 50%; top: 100%; }
.h-br { left: 100%; top: 100%; }
```
